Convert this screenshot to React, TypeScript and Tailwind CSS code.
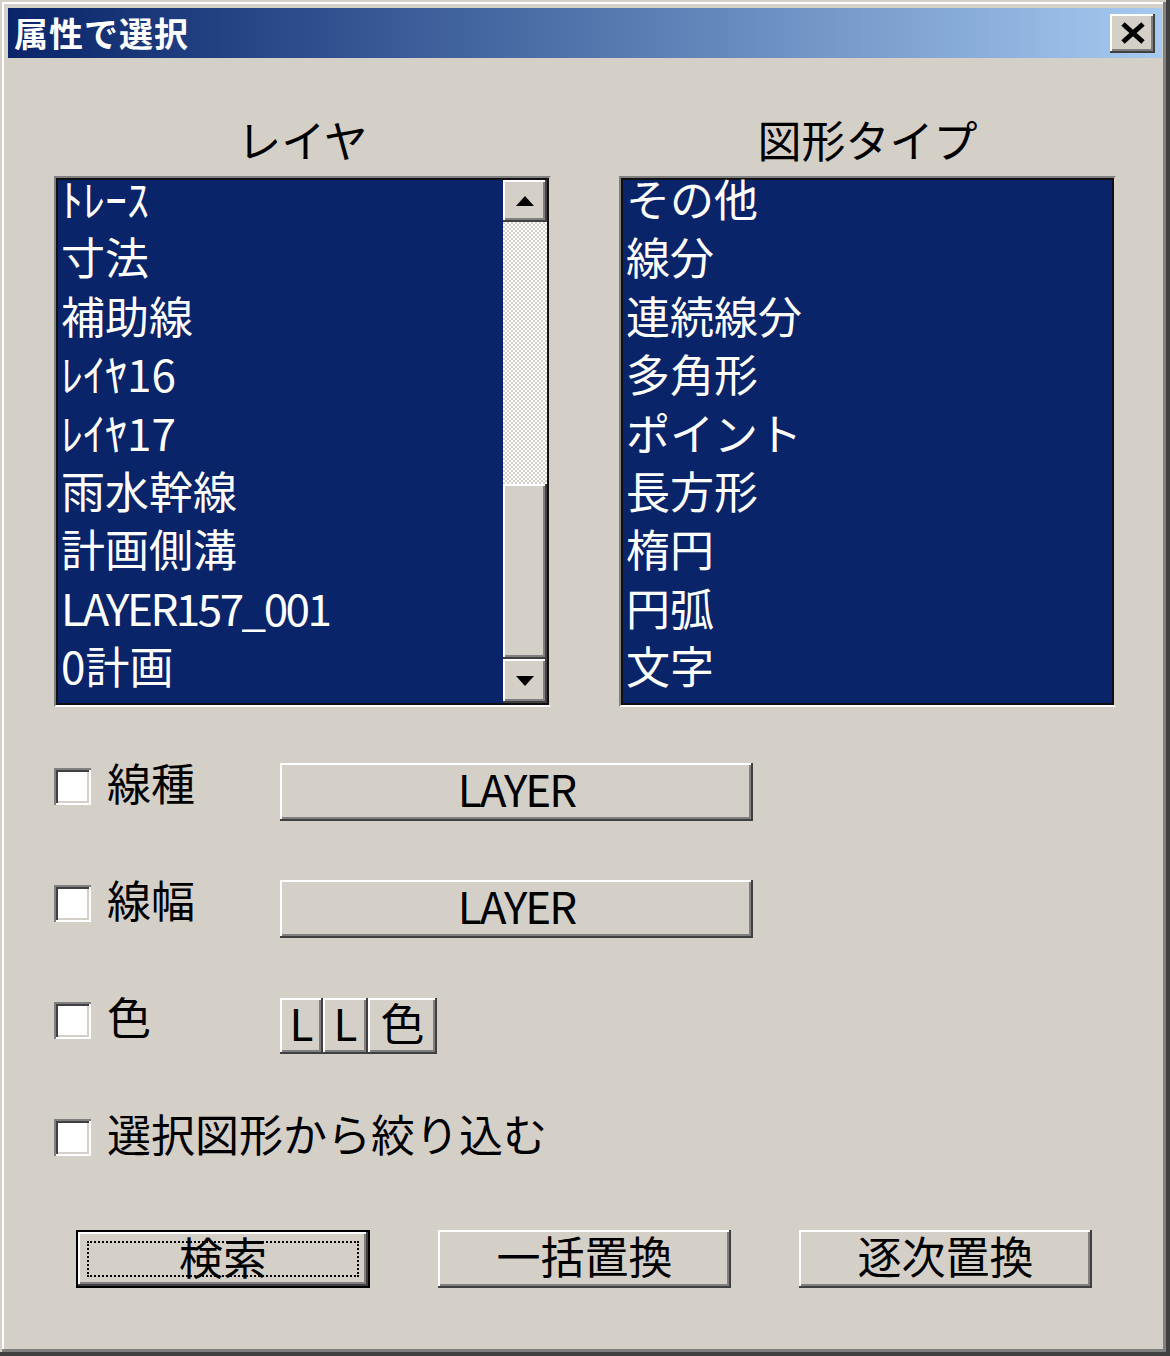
import React from "react";

const layers = ["ﾄﾚｰｽ", "寸法", "補助線", "ﾚｲﾔ16", "ﾚｲﾔ17", "雨水幹線", "計画側溝", "LAYER157_001", "0計画"];
const shapes = ["その他", "線分", "連続線分", "多角形", "ポイント", "長方形", "楕円", "円弧", "文字"];

const raised =
  "bg-[#d4d0c8] shadow-[inset_-2px_-2px_0_#404040,inset_2px_2px_0_#ffffff,inset_-4px_-4px_0_#808080]";
const sunken =
  "shadow-[inset_2px_2px_0_#808080,inset_-2px_-2px_0_#ffffff,inset_4px_4px_0_#404040,inset_-4px_-4px_0_#d4d0c8]";

function Checkbox({ label, wide }: { label: string; wide?: boolean }) {
  return (
    <div className={`flex items-start gap-[16px] ${wide ? "" : "w-[226px]"}`}>
      <div className={`w-[37px] h-[37px] mt-[5px] bg-white ${sunken}`} />
      <span className="mt-[1px] text-[44px] leading-[36px] text-black whitespace-nowrap">{label}</span>
    </div>
  );
}

function Arrow({ up }: { up?: boolean }) {
  return (
    <svg width="18" height="10" viewBox="0 0 18 10">
      <path d={up ? "M9 0 L18 10 L0 10 Z" : "M0 0 L18 0 L9 10 Z"} fill="#000" />
    </svg>
  );
}

function ListBox({ items, scroll }: { items: string[]; scroll?: boolean }) {
  return (
    <div className="w-[497px] h-[531px] bg-[#0a246a] border-t-[2px] border-l-[2px] border-t-[#808080] border-l-[#808080] border-b-[2px] border-r-[2px] border-b-white border-r-[#d4d0c8]">
      <div className="w-full h-full border-[2px] border-[#101010] flex">
        <div className="flex-1 pl-[3px]">
          {items.map((t) => (
            <div
              key={t}
              className={`h-[58.4px] text-[44px] leading-[36px] text-white whitespace-nowrap ${
                t.startsWith("LAYER") ? "tracking-[-2.5px]" : ""
              }`}
            >
              {t}
            </div>
          ))}
        </div>
        {scroll && (
          <div className="w-[44px] flex flex-col">
            <div className={`h-[42px] flex items-center justify-center ${raised}`}>
              <Arrow up />
            </div>
            <div className="h-[262px] bg-[repeating-conic-gradient(#ffffff_0_25%,#d4d0c8_0_50%)] bg-[length:4px_4px]" />
            <div className={`h-[175px] ${raised}`} />
            <div className={`flex-1 flex items-center justify-center ${raised}`}>
              <Arrow />
            </div>
          </div>
        )}
      </div>
    </div>
  );
}

const btnText = "flex items-center justify-center pb-[8px] text-[44px] leading-[36px] text-black";

export default function App() {
  return (
    <div className="w-[1170px] h-[1356px] bg-[#d4d0c8] font-[family-name:'Noto_Sans_CJK_JP',sans-serif] shadow-[inset_-4px_-4px_0_#404040,inset_2px_2px_0_#d4d0c8,inset_-7px_-7px_0_#808080,inset_4px_4px_0_#ffffff] pt-[8px] px-[8px]">
      {/* title bar */}
      <div className="h-[50px] flex items-center justify-between pl-[6px] pr-[7px] bg-gradient-to-r from-[#0a246a] to-[#a6caf0]">
        <span className="text-white font-bold text-[34px] leading-[34px] tracking-[1px]">属性で選択</span>
        <div className={`w-[45px] h-[39px] flex items-center justify-center ${raised}`}>
          <svg width="28" height="24" viewBox="0 0 28 24">
            <path d="M4 3 L24 21 M24 3 L4 21" stroke="#000" strokeWidth="5" />
          </svg>
        </div>
      </div>

      <div className="pl-[46px]">
        {/* lists */}
        <div className="flex gap-[68px] mt-[57px]">
          <div className="flex flex-col items-center">
            <div className="h-[48px] text-[44px] leading-[48px] text-black mb-[13px]">レイヤ</div>
            <ListBox items={layers} scroll />
          </div>
          <div className="flex flex-col items-center">
            <div className="h-[48px] text-[44px] leading-[48px] text-black mb-[13px]">図形タイプ</div>
            <ListBox items={shapes} />
          </div>
        </div>

        {/* options */}
        <div className="flex flex-col gap-[59px] mt-[56px]">
          <div className="flex items-start h-[58px]">
            <Checkbox label="線種" />
            <div className={`w-[473px] h-[58px] tracking-[-2px] ${btnText} ${raised}`}>LAYER</div>
          </div>
          <div className="flex items-start h-[58px]">
            <Checkbox label="線幅" />
            <div className={`w-[473px] h-[58px] tracking-[-2px] ${btnText} ${raised}`}>LAYER</div>
          </div>
          <div className="flex items-start h-[58px]">
            <Checkbox label="色" />
            <div className="flex mt-[1px]">
              <div className={`w-[43px] h-[56px] ${btnText} ${raised}`}>L</div>
              <div className={`w-[45px] h-[56px] ${btnText} ${raised}`}>L</div>
              <div className={`w-[69px] h-[56px] ${btnText} ${raised}`}>色</div>
            </div>
          </div>
          <div className="flex items-start h-[58px]">
            <Checkbox label="選択図形から絞り込む" wide />
          </div>
        </div>
      </div>

      {/* bottom buttons */}
      <div className="flex gap-[68px] pl-[68px] mt-[58px]">
        <div className="w-[294px] h-[58px] border-[2px] border-black">
          <div className={`w-full h-full p-[9px] ${raised}`}>
            <div className="w-full h-full border-[2px] border-dotted border-black flex items-center justify-center pb-[6px] text-[44px] leading-[36px]">
              検索
            </div>
          </div>
        </div>
        <div className={`w-[293px] h-[58px] ${btnText} ${raised}`}>一括置換</div>
        <div className={`w-[293px] h-[58px] ${btnText} ${raised}`}>逐次置換</div>
      </div>
    </div>
  );
}
